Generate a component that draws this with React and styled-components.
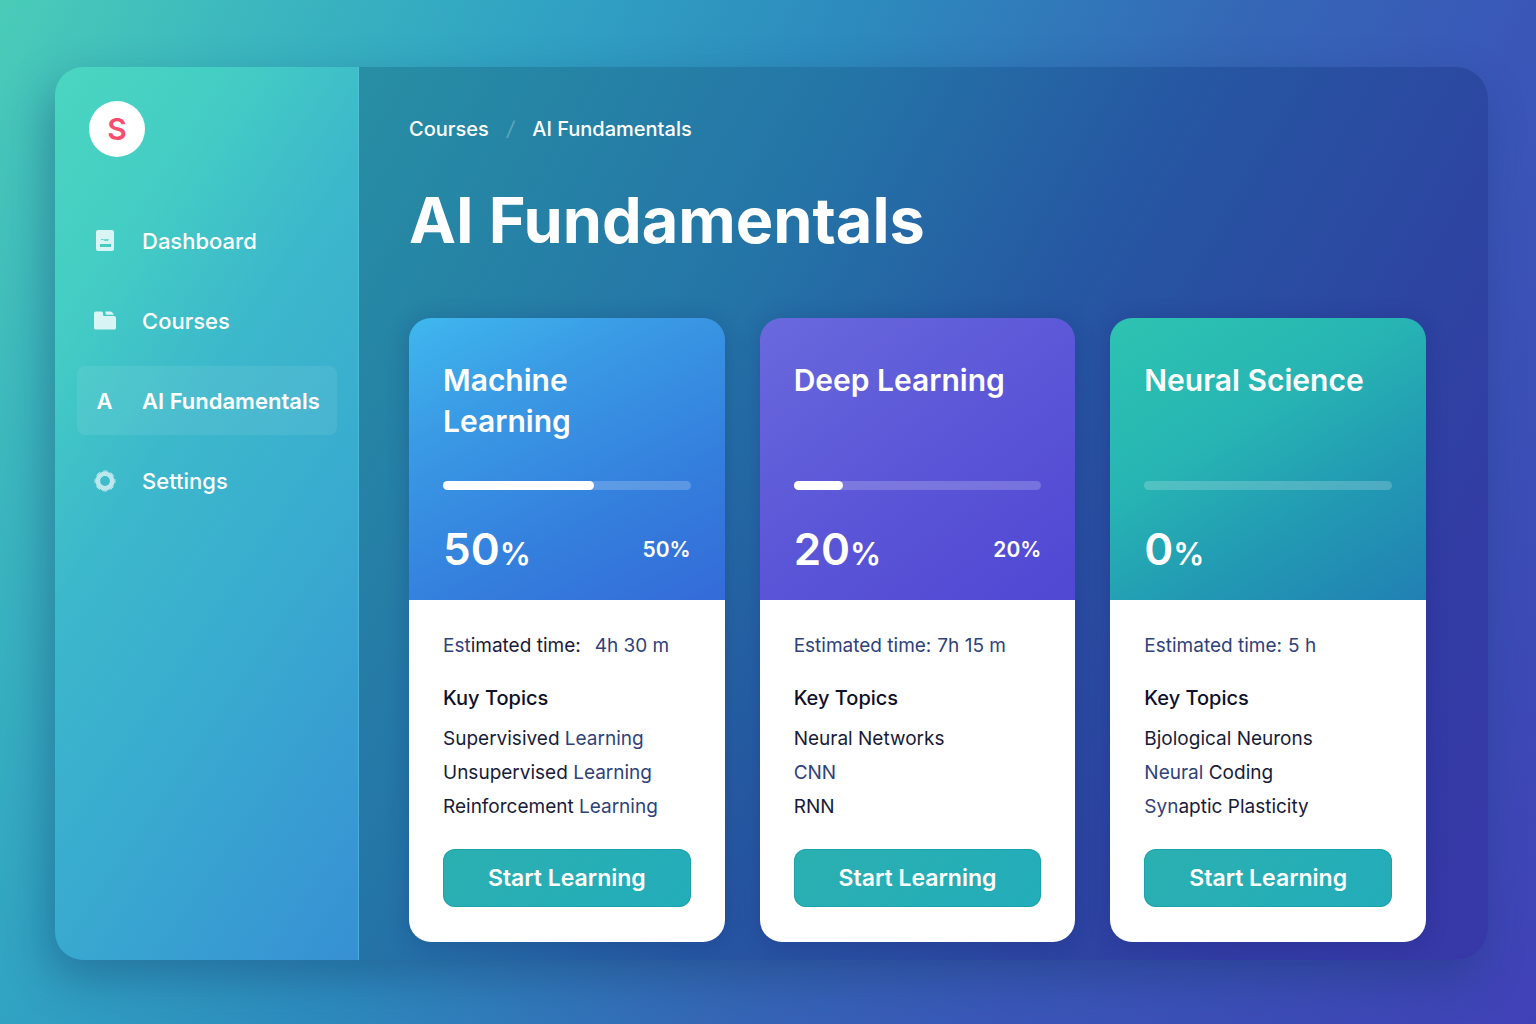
import React from "react";
import styled, { createGlobalStyle } from "styled-components";

const GlobalStyle = createGlobalStyle`
  *, *::before, *::after { box-sizing: border-box; }
  body {
    margin: 0;
    font-family: Inter, "Liberation Sans", sans-serif;
    color: #fff;
    -webkit-font-smoothing: antialiased;
  }
  h1, h2, h3, p, ul { margin: 0; padding: 0; }
  ul { list-style: none; }
`;

const Page = styled.div`
  min-height: 100vh;
  display: flex;
  padding: 67px 48px 64px 55px;
  background: linear-gradient(118deg, #4accb8 0%, #3cb8be 12%, #31a3c3 26%, #2d8abd 42%, #3566b6 61%, #3a57b8 74%, #3c4cb6 88%, #4041b6 100%);
`;

const Shell = styled.div`
  flex: 1;
  display: flex;
  border-radius: 32px;
  box-shadow: -8px 18px 44px rgba(20, 50, 100, 0.36);
`;

const Sidebar = styled.aside`
  flex: 0 0 304px;
  padding: 34px 22px;
  border-radius: 28px 0 0 28px;
  background: linear-gradient(124deg, #4ad6c0 0%, #44cdc4 20%, #3cb8cb 40%, #39accf 62%, #3790d4 100%);
  box-shadow: inset -1px 0 0 rgba(90, 200, 230, 0.5);
`;

const Logo = styled.div`
  width: 56px;
  height: 56px;
  margin: 0 0 49px 12px;
  display: grid;
  place-items: center;
  border-radius: 50%;
  background: #fff;
  color: #fb4d6d;
  font-size: 30px;
  line-height: 40px;
  font-weight: 600;
`;

const Nav = styled.nav`
  display: flex;
  flex-direction: column;
  gap: 11px;
`;

const NavLink = styled.a`
  display: flex;
  align-items: center;
  gap: 24px;
  height: 69px;
  padding: 0 14px;
  border-radius: 8px;
  color: #fff;
  font-size: 22px;
  font-weight: ${(p) => (p.$active ? 600 : 500)};
  white-space: nowrap;
  text-decoration: none;
  background: ${(p) => (p.$active ? "rgba(255, 255, 255, 0.08)" : "transparent")};
`;

const NavIcon = styled.span`
  flex: 0 0 27px;
  display: grid;
  place-items: center;
  color: rgba(255, 255, 255, ${(p) => (p.$strong ? 1 : p.$soft ? 0.65 : 0.8)});
  svg { display: block; }
`;

const Main = styled.main`
  flex: 1;
  min-width: 0;
  padding: 46px 62px 18px 50px;
  border-radius: 0 32px 32px 0;
  background: linear-gradient(120deg, #278fa4 0%, #2474a7 31%, #2656a2 52%, #2c47a1 70%, #323ca4 84%, #3838a8 100%);
`;

const Breadcrumb = styled.nav`
  display: flex;
  gap: 18px;
  font-size: 20px;
  font-weight: 500;
  line-height: 32px;
  a { color: #fff; text-decoration: none; }
  i { color: rgba(255, 255, 255, 0.25); }
`;

const Title = styled.h1`
  margin: 34px 0 56px;
  font-size: 63px;
  line-height: 83px;
  font-weight: 700;
`;

const Grid = styled.div`
  display: grid;
  grid-template-columns: repeat(3, 1fr);
  gap: 35px;
`;

const Card = styled.article`
  overflow: hidden;
  border-radius: 22px;
  box-shadow: 0 2px 22px rgba(16, 30, 110, 0.24);
`;

const CardHead = styled.header`
  padding: 42px 34px 23px;
  background: ${(p) => p.$fill};
`;

const CardTitle = styled.h2`
  min-height: 82px;
  font-size: 30px;
  line-height: 41px;
  font-weight: 600;
`;

const Track = styled.div`
  height: 9px;
  margin-top: 39px;
  border-radius: 5px;
  background: rgba(255, 255, 255, 0.2);
`;

const Fill = styled.div`
  height: 100%;
  border-radius: 5px;
  background: #fff;
`;

const Stats = styled.div`
  display: flex;
  align-items: center;
  justify-content: space-between;
  height: 56px;
  margin-top: 31px;
`;

const Percent = styled.strong`
  font-size: 44px;
  font-weight: 600;
  small { font-size: 31px; }
`;

const SmallPercent = styled.span`
  font-size: 21px;
  font-weight: 600;
`;

const CardBody = styled.div`
  padding: 31px 34px 35px;
  background: #fff;
  color: #171b38;
`;

const Estimate = styled.p`
  display: flex;
  gap: ${(p) => (p.$wide ? 14 : 6)}px;
  font-size: 19px;
  line-height: 30px;
  white-space: nowrap;
`;

const Tone = styled.span`
  color: ${(p) => (p.$blue ? "#2f4279" : "#171b38")};
`;

const TopicsTitle = styled.h3`
  margin-top: 20px;
  font-size: 20px;
  line-height: 34px;
  font-weight: 500;
  color: #0d1129;
`;

const Topics = styled.ul`
  margin-top: 7px;
  font-size: 19px;
  line-height: 34px;
  white-space: nowrap;
`;

const Button = styled.button`
  display: block;
  width: 100%;
  height: 58px;
  margin-top: 25px;
  border: 0;
  border-radius: 12px;
  background: linear-gradient(135deg, #2bb0b1, #23adba);
  box-shadow: inset 0 0 0 1px rgba(0, 140, 150, 0.35);
  color: #fff;
  font: inherit;
  font-size: 23px;
  font-weight: 600;
  cursor: pointer;
`;

const DashboardIcon = () => (
  <svg width="18" height="21" viewBox="0 0 18 21" aria-hidden="true">
    <path
      fill="currentColor"
      fillRule="evenodd"
      d="M2 0h14a2 2 0 0 1 2 2v17a2 2 0 0 1-2 2H2a2 2 0 0 1-2-2V2a2 2 0 0 1 2-2Zm2 14v3h11v-3H4Zm1-5v1h2.500l1 .8h3.500l1-1.600h-4l-1 .4L5 9Z"
    />
  </svg>
);

const FolderIcon = () => (
  <svg width="22" height="19" viewBox="0 0 22 19" aria-hidden="true">
    <path
      fill="currentColor"
      d="M2 .5h5.500a1.500 1.500 0 0 1 1.500 1.500v1.500a1.500 1.500 0 0 0 1.500 1.500H20a2 2 0 0 1 2 2v10a1.500 1.500 0 0 1-1.500 1.500h-19A1.500 1.500 0 0 1 0 17V2.500a2 2 0 0 1 2-2Z"
    />
    <path fill="currentColor" d="M11.500.5h5a2.500 2.500 0 0 1 2.200 1.500l1.300 1.800h-7a1.500 1.500 0 0 1-1.500-1.500Z" />
  </svg>
);

const GearIcon = () => (
  <svg width="22" height="22" viewBox="-11 -11 22 22" aria-hidden="true">
    <circle r="7.200" fill="none" stroke="currentColor" strokeWidth="4.600" />
    <circle r="10" fill="none" stroke="currentColor" strokeWidth="1" strokeDasharray="5 2.854" strokeDashoffset="2.500" />
  </svg>
);

const NAV = [
  { label: "Dashboard", icon: <DashboardIcon /> },
  { label: "Courses", icon: <FolderIcon /> },
  { label: "AI Fundamentals", icon: "A", active: true },
  { label: "Settings", icon: <GearIcon />, soft: true },
];

const COURSES = [
  {
    title: "Machine Learning",
    fill: "linear-gradient(152deg, #3fb8ee 0%, #3a9be5 28%, #347fdd 66%, #346bd9 100%)",
    value: 50,
    bar: 61,
    time: "4h 30 m",
    wide: true,
    label: [["Est", true], ["imated time:", false]],
    heading: "Kuy Topics",
    topics: [
      [["Supervisived ", false], ["Learning", true]],
      [["Unsupervised ", false], ["Learning", true]],
      [["Reinforcement ", false], ["Learning", true]],
    ],
  },
  {
    title: "Deep Learning",
    fill: "linear-gradient(144deg, #6a69dd 0%, #5c58d8 45%, #5047d3 100%)",
    value: 20,
    bar: 20,
    time: "7h 15 m",
    label: [["Estimated time:", true]],
    heading: "Key Topics",
    topics: [[["Neural Networks", false]], [["CNN", true]], [["RNN", false]]],
  },
  {
    title: "Neural Science",
    fill: "linear-gradient(148deg, #2dc3b1 0%, #27b5b3 38%, #229bb3 66%, #2180b3 100%)",
    value: 0,
    bar: 0,
    time: "5 h",
    label: [["Estimated time:", true]],
    heading: "Key Topics",
    topics: [
      [["Bjological Neurons", false]],
      [["Neural ", true], ["Coding", false]],
      [["Syn", true], ["aptic Plasticity", false]],
    ],
  },
];

const Toned = ({ parts }) => parts.map(([text, blue]) => <Tone key={text} $blue={blue}>{text}</Tone>);

const CourseCard = ({ course }) => (
  <Card>
    <CardHead $fill={course.fill}>
      <CardTitle>{course.title}</CardTitle>
      <Track role="progressbar" aria-label={course.title} aria-valuenow={course.value} aria-valuemin={0} aria-valuemax={100}>
        <Fill style={{ width: `${course.bar}%` }} />
      </Track>
      <Stats>
        <Percent>{course.value}<small>%</small></Percent>
        {course.value > 0 && <SmallPercent>{course.value}%</SmallPercent>}
      </Stats>
    </CardHead>
    <CardBody>
      <Estimate $wide={course.wide}>
        <span><Toned parts={course.label} /></span>
        <Tone $blue>{course.time}</Tone>
      </Estimate>
      <TopicsTitle>{course.heading}</TopicsTitle>
      <Topics>
        {course.topics.map((parts) => <li key={parts[0][0]}><Toned parts={parts} /></li>)}
      </Topics>
      <Button type="button">Start Learning</Button>
    </CardBody>
  </Card>
);

export default function App() {
  return (
    <>
      <GlobalStyle />
      <Page>
        <Shell>
          <Sidebar>
            <Logo>S</Logo>
            <Nav aria-label="Main">
              {NAV.map((item) => (
                <NavLink key={item.label} href="#" $active={item.active} aria-current={item.active ? "page" : undefined}>
                  <NavIcon $strong={item.active} $soft={item.soft}>{item.icon}</NavIcon>
                  {item.label}
                </NavLink>
              ))}
            </Nav>
          </Sidebar>
          <Main>
            <Breadcrumb aria-label="Breadcrumb">
              <a href="#">Courses</a>
              <i>/</i>
              <a href="#" aria-current="page">AI Fundamentals</a>
            </Breadcrumb>
            <Title>AI Fundamentals</Title>
            <Grid>
              {COURSES.map((course) => <CourseCard key={course.title} course={course} />)}
            </Grid>
          </Main>
        </Shell>
      </Page>
    </>
  );
}
